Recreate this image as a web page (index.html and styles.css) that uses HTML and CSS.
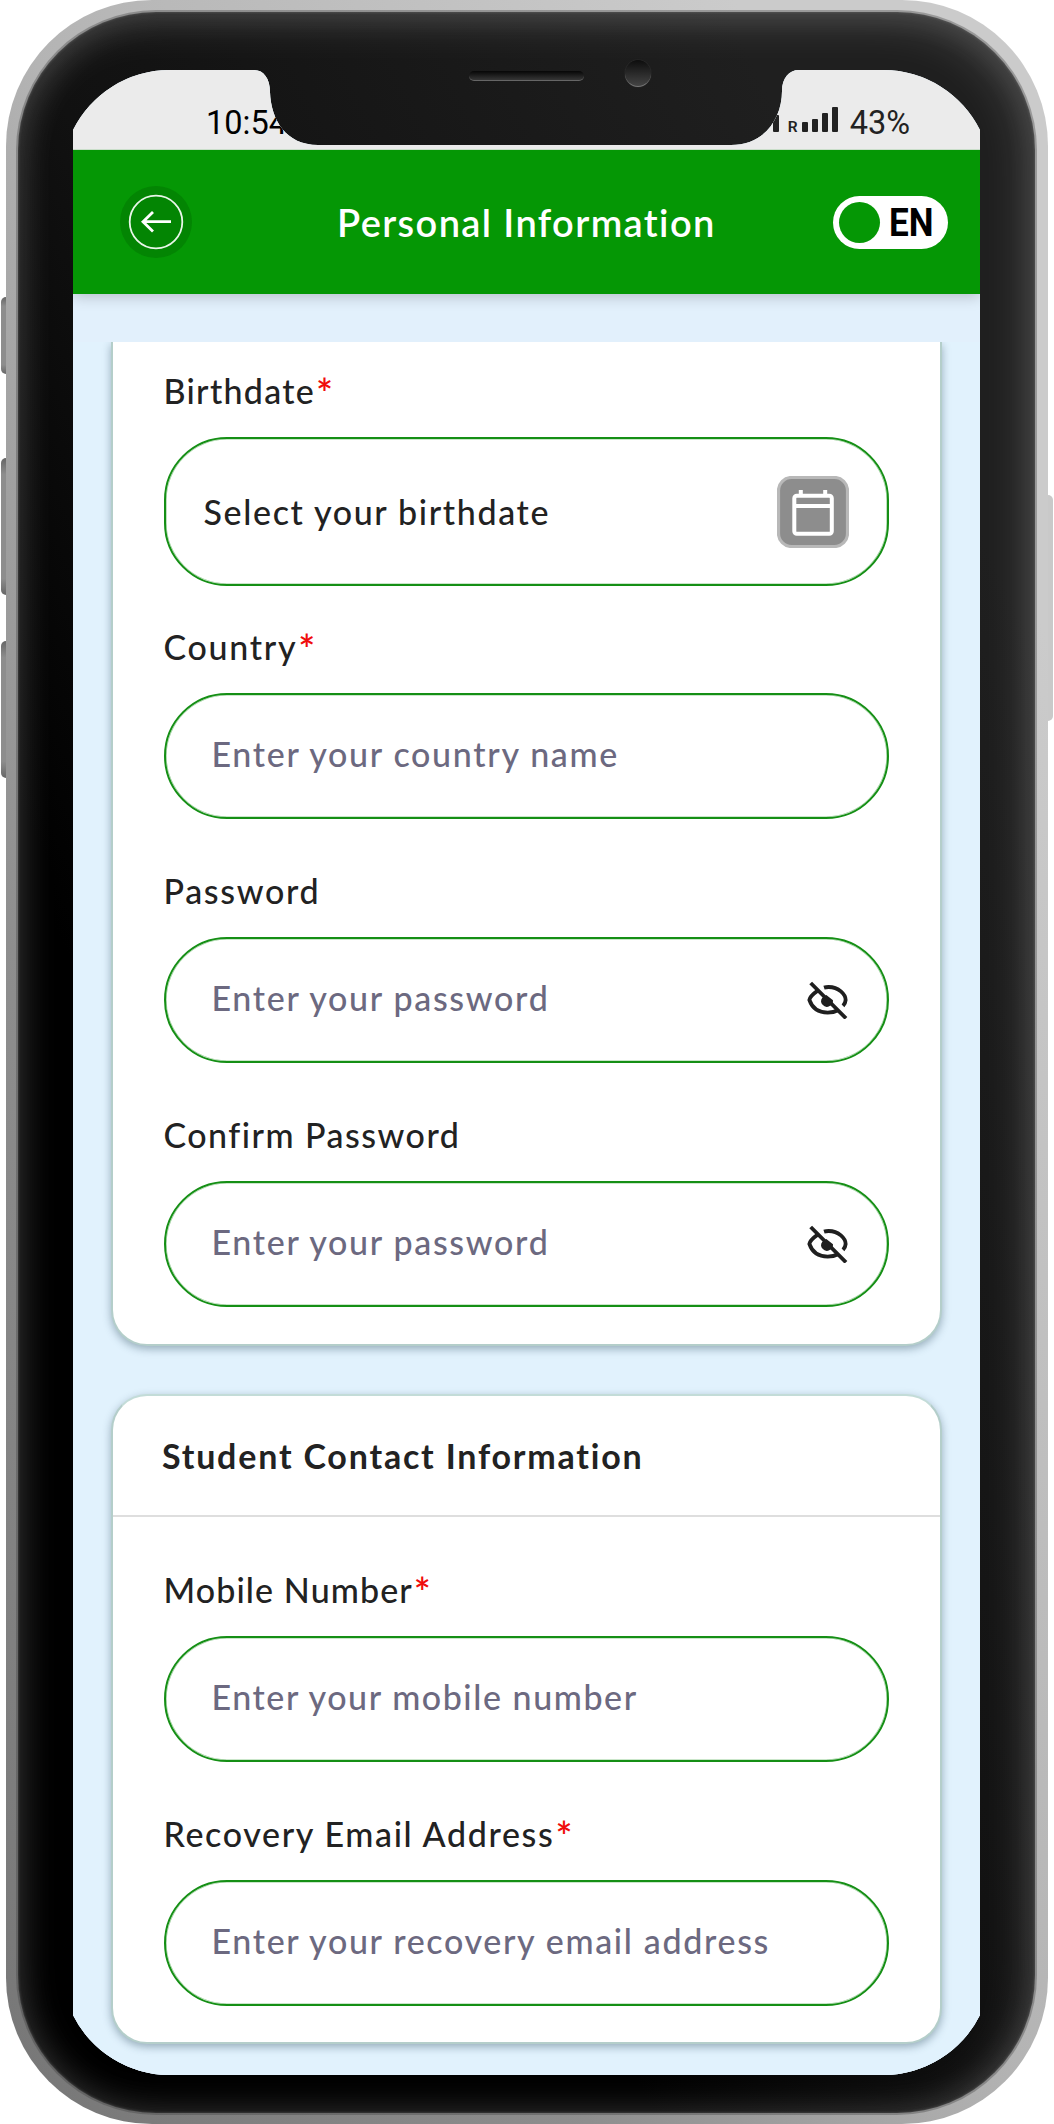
FILE: index.html
```html
<!DOCTYPE html>
<html lang="en">
<head>
<meta charset="utf-8">
<title>Personal Information</title>
<link rel="stylesheet" href="styles.css">
</head>
<body>
<svg class="defs" width="0" height="0" aria-hidden="true">
  <symbol id="eye-off" viewBox="0 0 123 115">
    <g fill="none" stroke="#1f1f1f" stroke-width="11.5">
      <path d="M11 6L117 112"/>
      <path d="M33 28Q8 46 7 57Q20 95 62 95Q80 95 93 88"/>
      <path d="M51 20Q57 18 65 18C95 18 116 40 116 57Q115 68 108 75"/>
    </g>
    <path d="M46 50A17 17 0 0 0 68 75Q79 70 78 58L58 42Z" fill="#1f1f1f"/>
  </symbol>
</svg>
<div class="phone">
  <i class="key key-mute"></i><i class="key key-up"></i><i class="key key-down"></i><i class="key key-power"></i>
  <div class="bezel">
    <i class="speaker"></i><i class="camera"></i>
    <main class="screen">
      <div class="status">
        <span class="clock">10:54</span>
        <span class="indicators">
          <i class="bar b0"></i><span class="roam">R</span>
          <i class="bar b1"></i><i class="bar b2"></i><i class="bar b3"></i><i class="bar b4"></i>
          <span class="battery">43%</span>
        </span>
      </div>
      <header class="appbar">
        <svg class="back" viewBox="0 0 72 72">
          <circle cx="36" cy="36" r="36" fill="#038503"/>
          <circle cx="36" cy="36" r="26.3" fill="none" stroke="#e9f6e9" stroke-width="1.8"/>
          <path d="M51 35.7H23M33 26L23 35.7L33 45.5" fill="none" stroke="#fff" stroke-width="2.8"/>
        </svg>
        <h1 class="title">Personal Information</h1>
        <div class="lang"><i class="knob"></i><span class="code">EN</span></div>
      </header>
      <div class="content">
        <div class="viewport">
          <section class="card card-first">
            <div class="field">
              <div class="label"><span class="t-birth">Birthdate</span><span class="req">*</span></div>
              <div class="box box-date"><span class="t-select">Select your birthdate</span>
                <svg class="calendar" viewBox="0 0 72 72">
                  <rect x="1.5" y="1.5" width="69" height="69" rx="13" fill="#8d8d8d" stroke="#b8b8b8" stroke-width="3.2"/>
                  <g fill="none" stroke="#fff" stroke-width="4">
                    <rect x="17.3" y="19.7" width="37.5" height="38" rx="2.5"/>
                    <path d="M17.3 30H54.8M23.8 14V20M48.2 14V20"/>
                  </g>
                </svg>
              </div>
            </div>
            <div class="field after-date">
              <div class="label"><span class="t-country">Country</span><span class="req">*</span></div>
              <div class="box"><span class="t-ecountry">Enter your country name</span></div>
            </div>
            <div class="field">
              <div class="label"><span class="t-pass">Password</span></div>
              <div class="box"><span class="t-epass">Enter your password</span><svg class="eye"><use href="#eye-off"/></svg></div>
            </div>
            <div class="field">
              <div class="label"><span class="t-confirm">Confirm Password</span></div>
              <div class="box"><span class="t-epass">Enter your password</span><svg class="eye"><use href="#eye-off"/></svg></div>
            </div>
          </section>
          <section class="card card-second">
            <h2 class="heading"><span class="t-head">Student Contact Information</span></h2>
            <div class="field">
              <div class="label"><span class="t-mobile">Mobile Number</span><span class="req">*</span></div>
              <div class="box"><span class="t-emobile">Enter your mobile number</span></div>
            </div>
            <div class="field">
              <div class="label"><span class="t-recovery">Recovery Email Address</span><span class="req">*</span></div>
              <div class="box"><span class="t-erecovery">Enter your recovery email address</span></div>
            </div>
          </section>
        </div>
      </div>
    </main>
  </div>
</div>
</body>
</html>
```
FILE: styles.css
```css
* { box-sizing: border-box; }
body { margin: 0; background: #fff; font-family: Lato, "Open Sans", sans-serif; color: #222; }
.defs { position: absolute; }

/* Device body */
.phone {
  position: relative; width: 1042px; height: 2124px; margin: 0 6px;
  padding: 12px 13px 11px 12px; border-radius: 146px;
  background: linear-gradient(to top right, #767676, #8e8e8e 28%, #b4b4b4 50%, #cbcbcb 85%);
}
.key { position: absolute; left: -5px; width: 5px; border-radius: 5px 0 0 5px; background: linear-gradient(#666, #8d8d8d 12%, #8d8d8d 88%, #666); }
.key-mute { top: 297px; height: 77px; }
.key-up { top: 458px; height: 137px; }
.key-down { top: 641px; height: 137px; }
.key-power { left: auto; right: -5px; top: 495px; height: 226px; border-radius: 0 5px 5px 0; background: #c9c9c9; }
.bezel {
  position: relative; height: 2101px; padding: 58px 55px 38px; border-radius: 138px;
  background: linear-gradient(to top right, #000 30%, #111 50%, #1f1f1f 85%);
  box-shadow: 0 0 0 2px rgba(60,60,60,.35), inset 0 0 3px rgba(120,120,120,.6), inset -8px 8px 46px rgba(255,255,255,.17), inset 4px 0 36px rgba(255,255,255,.12);
}
.speaker { position: absolute; left: 451px; top: 59px; width: 115px; height: 10px; border-radius: 5px; background: linear-gradient(#060606, #363636); border-bottom: 1px solid #666; }
.camera { position: absolute; left: 607px; top: 48px; width: 26px; height: 27px; border-radius: 50%; background: linear-gradient(#0d0d0d, #444); border-bottom: 1px solid #777; box-shadow: 0 0 1px #555; }

.screen {
  width: 907px; height: 2005px; background: #e1f2fd;
  clip-path: path("M0 60A108 108 0 0 1 96 0H181C191 0 197 9 197 22C198 50 213 75 245 75H658C692 75 709 48 709 21C709 8 716 0 726 0H811A108 108 0 0 1 907 60V1945A108 108 0 0 1 811 2005H96A108 108 0 0 1 0 1945Z");
}
.status { position: relative; z-index: 2; display: flex; justify-content: space-between; height: 79px; padding: 33px 70px 0 133px; background: #ebebeb; font: 32.5px/40px Roboto, sans-serif; border-bottom: 1px solid #c9dec9; margin-bottom: 1px; }
.clock { color: #000; }
.indicators { display: flex; align-items: flex-end; height: 29px; }
.bar { width: 6px; border-radius: 1px; background: #222; }
.b0 { height: 17px; margin-right: 9px; }
.b1 { height: 10px; margin-left: 4px; }
.b2 { height: 13px; margin-left: 4px; }
.b3 { height: 19px; margin-left: 4px; }
.b4 { height: 25px; margin-left: 4px; }
.roam { font-size: 15.5px; font-weight: 600; line-height: 12px; margin-bottom: -1px; }
.battery { height: 40px; margin: 0 0 -11px 12px; }
.status { height: 80px; margin-bottom: 0; }

.appbar { position: relative; z-index: 1; display: flex; align-items: center; height: 144px; padding: 0 32px 0 47px; background: #059705; box-shadow: 0 2px 14px rgba(0,0,0,.22); }
.back { width: 72px; height: 72px; }
.title { margin: 0 0 0 145px; width: 380px; color: #fff; font-size: 38px; font-weight: 600; line-height: 50px; white-space: nowrap; letter-spacing: 1.4px; }
.lang { display: flex; align-items: center; width: 115px; height: 53px; margin-left: auto; padding-left: 6px; border-radius: 27px; background: #fff; }
.knob { width: 41px; height: 41px; border-radius: 50%; background: #059705; }
.code { margin: 3px 0 0 9px; color: #000; font: 700 39px/53px Roboto, sans-serif; transform: scaleX(.9); transform-origin: left; }

.content { height: 1781px; padding-top: 48px; background: #e2f0fc; }
.viewport { height: 1733px; padding: 0 38px; overflow: hidden; background: #e1f2fd; }
.card { width: 831px; padding: 0 51.5px 0 50.5px; border: 2px solid #b4ceca; border-radius: 36px; background: #fff; box-shadow: 0 3px 9px rgba(40,70,90,.4); }
.card-first { height: 1004px; padding-top: 26px; border-top: 0; border-radius: 0 0 36px 36px; }
.card-second { height: 650px; margin-top: 48px; border-top-color: #c3dcd8; }
.heading { height: 121px; margin: 0 -51.5px 50px -50.5px; padding: 37px 0 0 49px; border-bottom: 2px solid #dedede; font-size: 34px; font-weight: 700; line-height: 46px; }
.field + .field { margin-top: 49px; }
.field + .after-date { margin-top: 38px; }
.label { height: 69px; font-size: 34px; font-weight: 500; line-height: 46px; white-space: nowrap; }
.req { color: #f00c0c; margin-left: 1px; font-weight: 600; display: inline-block; line-height: 1; font-size: 40px; vertical-align: -4px; height: 40px; }
.box { display: flex; align-items: center; justify-content: space-between; height: 126px; padding: 0 39px 0 46px; border: 2px solid #158f15; border-radius: 63px; box-shadow: inset 0 0 0 .6px rgba(21,143,21,.45); color: #6c6980; font-size: 34px; font-weight: 500; white-space: nowrap; }
.box span { padding-bottom: 5px; }
.box-date { height: 149px; padding: 0 38px; color: #222; }
.box-date span { padding-bottom: 0; }
.calendar { width: 72px; height: 72px; }
.eye { width: 41px; height: 38.3px; }

/* Tracking per string */
.t-birth { letter-spacing: 1.3px; }
.t-select { letter-spacing: 1.65px; }
.t-country { letter-spacing: 1.7px; }
.t-ecountry { letter-spacing: 1.68px; }
.t-pass { letter-spacing: 1.65px; }
.t-epass { letter-spacing: 1.68px; }
.t-confirm { letter-spacing: 1.47px; }
.t-head { letter-spacing: 1.8px; }
.t-mobile { letter-spacing: 1.1px; }
.t-emobile { letter-spacing: 1.56px; }
.t-recovery { letter-spacing: 1.65px; }
.t-erecovery { letter-spacing: 1.66px; }
```
